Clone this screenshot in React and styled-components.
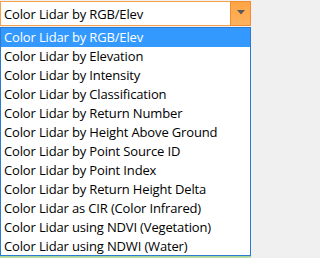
import React from "react";
import styled, { createGlobalStyle } from "styled-components";

const Global = createGlobalStyle`
  html, body { margin: 0; padding: 0; background: #f0f0f0; }
  body { overflow: hidden; font-family: "Open Sans", "Noto Sans", sans-serif; }
  * { box-sizing: border-box; }
`;

const Page = styled.div`
  width: 253px;
  height: 258px;
  padding-top: 1px;
  background: #f0f0f0;
  overflow: hidden;
`;

const Combo = styled.div`
  width: 251px;
  height: 25px;
  border: 1px solid #f5a04a;
  background: #fff;
  display: flex;
  align-items: stretch;
`;

const ComboText = styled.div`
  flex: 1;
  display: flex;
  align-items: center;
  padding-left: 3px;
  font-size: 13px;
  letter-spacing: -0.15px;
  color: #000;
  white-space: nowrap;
`;

const Button = styled.div`
  width: 21px;
  margin: -1px -1px -1px 0;
  border: 1px solid #f08c34;
  background: linear-gradient(#ffa444, #ffb25e);
  display: flex;
  align-items: center;
  justify-content: center;
  padding-bottom: 2px;
`;

const List = styled.div`
  margin-top: 1px;
  width: 251px;
  border: 1px solid #2b7bd3;
  background: #fff;
`;

const Item = styled.div`
  height: 19px;
  line-height: 19px;
  padding-left: 3px;
  font-size: 13px;
  letter-spacing: -0.15px;
  white-space: nowrap;
  overflow: hidden;
  color: ${(p) => (p.$selected ? "#fff" : "#000")};
  background: ${(p) => (p.$selected ? "#3399ff" : "transparent")};
  &:last-child { height: 18px; line-height: 18px; }
`;

const BottomStrip = styled.div`
  width: 251px;
  height: 3px;
  background: linear-gradient(#9fd08c, #d8eecf);
`;

const items = [
  "Color Lidar by RGB/Elev",
  "Color Lidar by Elevation",
  "Color Lidar by Intensity",
  "Color Lidar by Classification",
  "Color Lidar by Return Number",
  "Color Lidar by Height Above Ground",
  "Color Lidar by Point Source ID",
  "Color Lidar by Point Index",
  "Color Lidar by Return Height Delta",
  "Color Lidar as CIR (Color Infrared)",
  "Color Lidar using NDVI (Vegetation)",
  "Color Lidar using NDWI (Water)",
];

export default function App() {
  return (
    <>
      <Global />
      <Page>
        <Combo>
          <ComboText>Color Lidar by RGB/Elev</ComboText>
          <Button>
            <svg width="8" height="5" viewBox="0 0 8 5">
              <path d="M0 0h8L4 4.5z" fill="#5a5a5a" />
            </svg>
          </Button>
        </Combo>
        <List>
          {items.map((t, i) => (
            <Item key={t} $selected={i === 0}>
              {t}
            </Item>
          ))}
        </List>
        <BottomStrip />
      </Page>
    </>
  );
}
